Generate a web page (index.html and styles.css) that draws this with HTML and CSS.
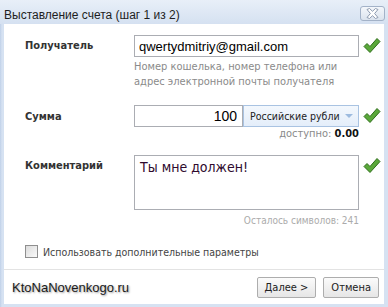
FILE: index.html
```html
<!DOCTYPE html>
<html lang="ru">
<head>
    <meta charset="UTF-8">
    <title>Выставление счета</title>
    <link rel="stylesheet" href="styles.css">
</head>
<body>
    <div class="dialog">
        <div class="titlebar">
            <span class="title">Выставление счета (шаг 1 из 2)</span>
            <button class="close-btn" type="button">
                <svg width="13" height="11" viewBox="0 0 13 11">
                    <path d="M1 1.5 L3.5 0.5 L6.5 3.3 L9.5 0.5 L12 1.5 L8.6 5.5 L12 9.5 L9.5 10.5 L6.5 7.7 L3.5 10.5 L1 9.5 L4.4 5.5 Z" fill="#fff" stroke="#8e9bb0" stroke-width="1"/>
                </svg>
            </button>
        </div>

        <div class="content">
            <div class="row">
                <label class="label">Получатель</label>
                <div class="field">
                    <input class="text-input" type="text" value="qwertydmitriy@gmail.com">
                    <div class="hint">Номер кошелька, номер телефона или адрес электронной почты получателя</div>
                </div>
                <svg class="check" viewBox="0 0 18 17"><polygon points="1,9.5 4,6.5 7,9.5 14,1.5 17,4.5 7,15.5" /></svg>
            </div>

            <div class="row row-sum">
                <label class="label">Сумма</label>
                <div class="field">
                    <div class="sum-line">
                        <input class="text-input amount" type="text" value="100">
                        <div class="currency">
                            <span>Российские рубли</span>
                            <span class="arrow"></span>
                        </div>
                    </div>
                    <div class="available">доступно: <b>0.00</b></div>
                </div>
                <svg class="check" viewBox="0 0 18 17"><polygon points="1,9.5 4,6.5 7,9.5 14,1.5 17,4.5 7,15.5" /></svg>
            </div>

            <div class="row row-comment">
                <label class="label">Комментарий</label>
                <div class="field">
                    <textarea class="comment">Ты мне должен!</textarea>
                    <div class="counter">Осталось символов: 241</div>
                </div>
                <svg class="check" viewBox="0 0 18 17"><polygon points="1,9.5 4,6.5 7,9.5 14,1.5 17,4.5 7,15.5" /></svg>
            </div>

            <label class="extra">
                <span class="checkbox"></span>
                Использовать дополнительные параметры
            </label>

            <div class="footer">
                <span class="watermark">KtoNaNovenkogo.ru</span>
                <div class="buttons">
                    <button class="btn" type="button">Далее &gt;</button>
                    <button class="btn" type="button">Отмена</button>
                </div>
            </div>
        </div>
    </div>
</body>
</html>
```

FILE: styles.css
```css
body {
    margin: 0;
    padding: 0;
    font-family: "DejaVu Sans Condensed", "Liberation Sans", sans-serif;
    background-color: #fff;
}
.dialog {
    width: 388px;
    height: 307px;
    box-sizing: border-box;
    background: linear-gradient(to right, #bfd0e8, #d6e2f2 2px, #d6e2f2);
    display: flex;
    flex-direction: column;
    padding: 0 4px 3px 4px;
}
.titlebar {
    height: 24px;
    margin: 0 -4px;
    padding: 0 3px 0 4px;
    background: linear-gradient(to bottom, #e8eff8, #d5e1f1);
    display: flex;
    align-items: center;
    justify-content: space-between;
}
.title {
    font-family: "Liberation Sans", sans-serif;
    font-size: 12px;
    color: #1e1e1e;
    margin-top: 5px;
}
.close-btn {
    width: 25px;
    height: 15px;
    margin-top: 3px;
    padding: 0;
    border: 1px solid #a3b2c8;
    border-radius: 3px;
    background: linear-gradient(to bottom, #f4f7fb, #dbe3ee);
    display: flex;
    align-items: center;
    justify-content: center;
}
.content {
    flex: 1;
    background-color: #fff;
    display: flex;
    flex-direction: column;
    padding-top: 11px;
}
.row {
    display: flex;
    align-items: flex-start;
}
.label {
    width: 109px;
    padding-left: 21px;
    padding-top: 4px;
    font-size: 11px;
    font-weight: bold;
    color: #333;
}
.field {
    width: 225px;
}
.check {
    width: 18px;
    height: 17px;
    margin: 2px 0 0 4px;
    fill: #5aa83a;
    stroke: #2f6e1b;
    stroke-width: 1;
}
.text-input {
    width: 100%;
    height: 22px;
    box-sizing: border-box;
    border: 1px solid #abadb3;
    padding: 0 4px;
    font-family: "Liberation Sans", sans-serif;
    font-size: 13px;
    color: #000;
    outline: none;
}
.hint {
    margin-top: 2px;
    font-size: 11px;
    line-height: 15px;
    color: #8a8a8a;
}
.row-sum {
    margin-top: 16px;
}
.row-sum .label {
    padding-top: 5px;
}
.sum-line {
    display: flex;
}
.amount {
    width: 109px;
    text-align: right;
    font-size: 14px;
    padding-right: 5px;
}
.currency {
    flex: 1;
    height: 22px;
    box-sizing: border-box;
    border: 1px solid #a9c3e2;
    background: linear-gradient(to bottom, #f3f8fd, #e4eefa);
    display: flex;
    align-items: center;
    justify-content: space-between;
    padding: 0 5px 0 6px;
    font-size: 10.5px;
    white-space: nowrap;
    color: #222;
}
.arrow {
    width: 0;
    height: 0;
    border-left: 4px solid transparent;
    border-right: 4px solid transparent;
    border-top: 4px solid #9dbbdf;
}
.available {
    text-align: right;
    font-size: 11px;
    line-height: 14px;
    margin-top: 0;
    color: #8a8a8a;
}
.available b {
    color: #111;
}
.row-comment {
    margin-top: 14px;
}
.row-comment .label {
    padding-top: 4px;
}
.comment {
    display: block;
    width: 100%;
    height: 55px;
    box-sizing: border-box;
    border: 1px solid #abadb3;
    padding: 3px 5px;
    resize: none;
    font-family: "DejaVu Sans Condensed", "Liberation Sans", sans-serif;
    font-size: 14px;
    color: #2e0a2e;
    outline: none;
}
.counter {
    text-align: right;
    font-size: 10px;
    line-height: 14px;
    margin-top: 4px;
    color: #ababab;
}
.extra {
    display: flex;
    align-items: center;
    margin-top: 17px;
    padding-left: 21px;
    font-size: 10.5px;
    color: #444;
}
.checkbox {
    width: 11px;
    height: 11px;
    border: 1px solid #8f8f8f;
    background: linear-gradient(to bottom right, #dcdcdc, #fafafa);
    margin-right: 5px;
}
.footer {
    margin-top: auto;
    height: 34px;
    border-top: 1px solid #e3e3e3;
    display: flex;
    align-items: center;
    justify-content: space-between;
    padding: 0 5px 0 8px;
}
.watermark {
    font-family: "Liberation Sans", sans-serif;
    font-size: 13px;
    color: #1a1a1a;
    text-shadow: 1px 1px 2px #9a9a9a;
}
.buttons {
    display: flex;
    gap: 7px;
}
.btn {
    height: 21px;
    padding: 0 7px;
    border: 1px solid #adadad;
    border-radius: 2px;
    background: linear-gradient(to bottom, #fbfbfb, #e6e6e6);
    font-family: "DejaVu Sans Condensed", "Liberation Sans", sans-serif;
    font-size: 11px;
    color: #222;
}
```
